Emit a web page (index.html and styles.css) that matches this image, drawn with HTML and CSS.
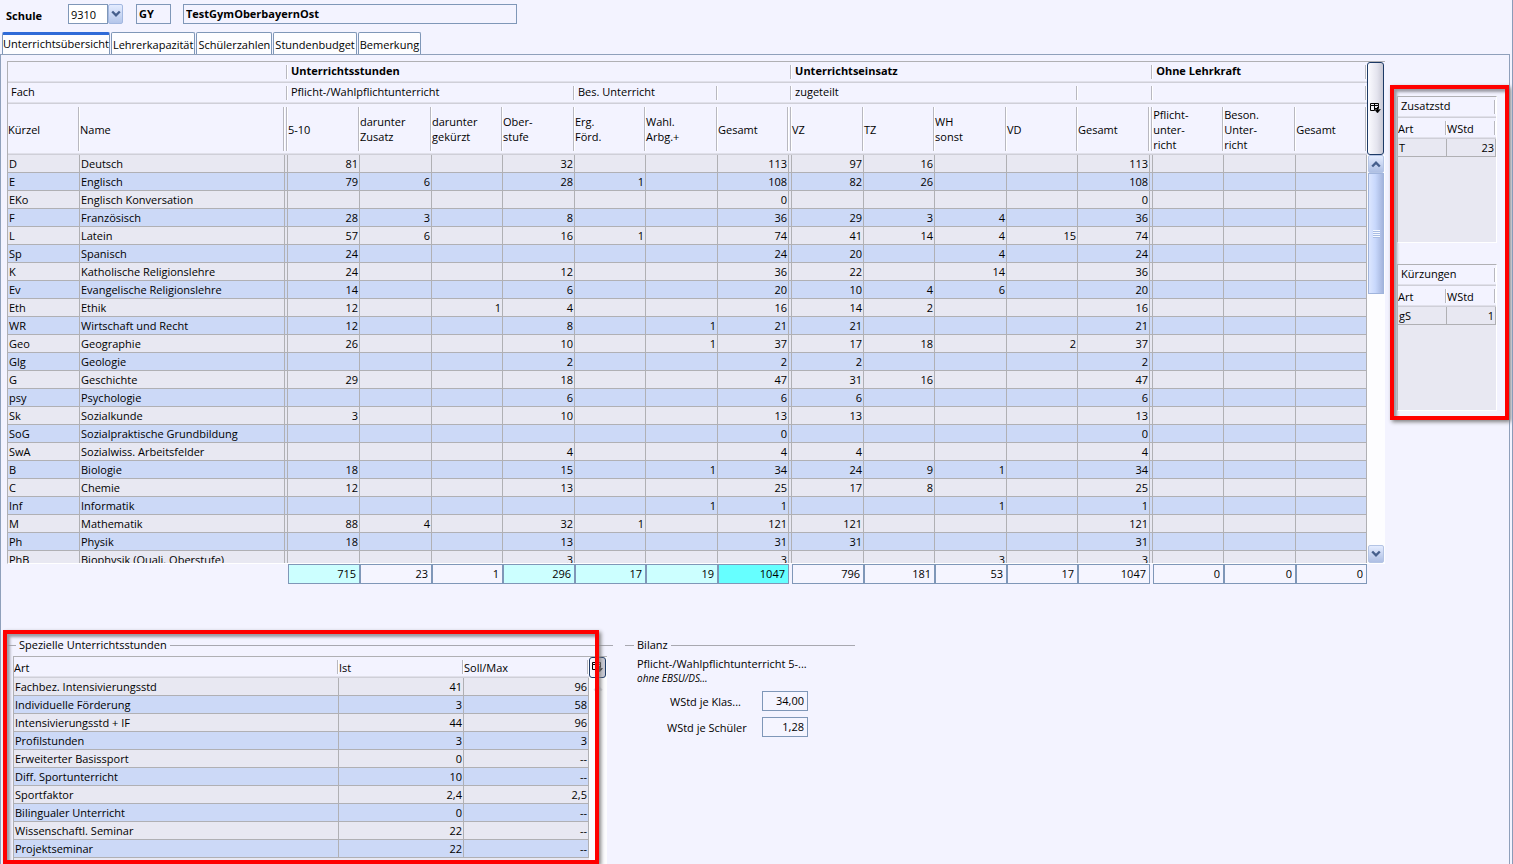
FILE: index.html
```html
<!DOCTYPE html>
<html lang="de">
<head>
<meta charset="utf-8">
<title>Unterrichtsübersicht</title>
<link rel="stylesheet" href="styles.css">
</head>
<body>
<svg class="sprite" aria-hidden="true">
  <symbol id="columns" viewBox="0 0 11 11"><path d="M.5 .5h8v2h-8zM.5 2.500v5h4M4.500 .5v7M8.500 2.500v3" fill="none" stroke="currentColor"/><path d="M4.500 5.500h4M7.500 4v3" fill="none" stroke="currentColor"/><path d="M4.500 6.500h6L7.500 10z" fill="currentColor" stroke="currentColor" stroke-width=".4"/></symbol>
  <symbol id="down" viewBox="0 0 10 8"><path d="M1.200 1.500 5 5.300l3.800-3.800" fill="none" stroke="currentColor" stroke-width="2.400"/></symbol>
  <symbol id="up" viewBox="0 0 10 8"><path d="M1.200 6.500 5 2.700l3.800 3.800" fill="none" stroke="currentColor" stroke-width="2.400"/></symbol>
</svg>

<header class="school">
  <label class="school-label" for="school-no">Schule</label>
  <span class="combo">
    <select id="school-no"><option>9310</option></select>
    <span class="combo-arrow"><svg class="chevron"><use href="#down"/></svg></span>
  </span>
  <input class="field school-type" value="GY" aria-label="Schulart" readonly>
  <input class="field school-name" value="TestGymOberbayernOst" aria-label="Schulname" readonly>
</header>

<nav class="tabs" role="tablist">
  <button class="tab tab-active" role="tab" aria-selected="true">Unterrichtsübersicht</button>
  <button class="tab" role="tab">Lehrerkapazität</button>
  <button class="tab" role="tab">Schülerzahlen</button>
  <button class="tab" role="tab">Stundenbudget</button>
  <button class="tab" role="tab">Bemerkung</button>
</nav>

<main class="panel">
  <div class="content">
    <div class="pane pane-main">
      <div class="viewport">
        <table class="grid lessons">
          <colgroup>
            <col class="c72"><col class="c205"><col class="c3">
            <col class="c72"><col class="c72"><col class="c71"><col class="c72"><col class="c71"><col class="c72"><col class="c71"><col class="c3">
            <col class="c72"><col class="c71"><col class="c72"><col class="c71"><col class="c72"><col class="c3">
            <col class="c71"><col class="c72"><col class="c71">
          </colgroup>
          <thead>
            <tr class="group group-bold"><th colspan="3"></th><th colspan="8">Unterrichtsstunden</th><th colspan="6">Unterrichtseinsatz</th><th colspan="3">Ohne Lehrkraft</th></tr>
            <tr class="group"><th colspan="3">Fach</th><th colspan="4">Pflicht-/Wahlpflichtunterricht</th><th colspan="2">Bes. Unterricht</th><th colspan="2"></th><th colspan="4">zugeteilt</th><th colspan="2"></th><th colspan="3"></th></tr>
            <tr class="columns"><th>Kürzel</th><th>Name</th><th></th><th>5-10</th><th>darunter<br>Zusatz</th><th>darunter<br>gekürzt</th><th>Ober-<br>stufe</th><th>Erg.<br>Förd.</th><th>Wahl.<br>Arbg.+</th><th>Gesamt</th><th></th><th>VZ</th><th>TZ</th><th>WH<br>sonst</th><th>VD</th><th>Gesamt</th><th></th><th>Pflicht-<br>unter-<br>richt</th><th>Beson.<br>Unter-<br>richt</th><th>Gesamt</th></tr>
          </thead>
          <tbody id="lessons"></tbody>
        </table>
      </div>
      <div class="rail">
        <button class="config config-tall" aria-label="Spalten wählen"><svg class="config-icon"><use href="#columns"/></svg></button>
        <div class="scrollbar">
          <button class="step" aria-label="Nach oben"><svg class="chevron"><use href="#up"/></svg></button>
          <div class="thumb"><span class="grip"></span></div>
          <button class="step step-end" aria-label="Nach unten"><svg class="chevron"><use href="#down"/></svg></button>
        </div>
      </div>
    </div>

    <div class="totals" id="totals"></div>

    <div class="lower">
      <fieldset class="box special">
        <legend>Spezielle Unterrichtsstunden</legend>
        <div class="pane pane-special">
          <div class="viewport">
            <table class="grid">
              <colgroup><col class="c325"><col class="c125"><col class="c125"></colgroup>
              <thead><tr class="single"><th>Art</th><th>Ist</th><th>Soll/Max</th></tr></thead>
              <tbody id="special"></tbody>
            </table>
          </div>
          <div class="rail rail-idle">
            <button class="config" aria-label="Spalten wählen"><svg class="config-icon"><use href="#columns"/></svg></button>
            <svg class="chevron idle"><use href="#up"/></svg>
          </div>
        </div>
      </fieldset>
      <fieldset class="box balance">
        <legend>Bilanz</legend>
        <p class="balance-title">Pflicht-/Wahlpflichtunterricht 5-...</p>
        <p class="balance-note">ohne EBSU/DS...</p>
        <div class="balance-row"><label for="per-class">WStd je Klas...</label><input class="field num" id="per-class" value="34,00" readonly></div>
        <div class="balance-row"><label for="per-pupil">WStd je Schüler</label><input class="field num" id="per-pupil" value="1,28" readonly></div>
      </fieldset>
      <div class="mark mark-special"></div>
    </div>
  </div>

  <aside class="mark side">
    <div class="pane side-pane">
      <table class="grid">
        <thead><tr class="group"><th colspan="2">Zusatzstd</th></tr><tr class="single"><th>Art</th><th>WStd</th></tr></thead>
        <tbody><tr><td>T</td><td class="n">23</td></tr></tbody>
      </table>
    </div>
    <div class="pane side-pane">
      <table class="grid">
        <thead><tr class="group"><th colspan="2">Kürzungen</th></tr><tr class="single"><th>Art</th><th>WStd</th></tr></thead>
        <tbody><tr><td>gS</td><td class="n">1</td></tr></tbody>
      </table>
    </div>
  </aside>
</main>
<script src="app.js"></script>
</body>
</html>
```
FILE: styles.css
```css
:root {
  --bg: #f3f3ff;
  --row: #e8e8f2;
  --row-alt: #ccd9f7;
  --line: #b0b0b4;
  --edge: #7f97b8;
  --red: #ff0000;
}
* { box-sizing: border-box; }
body {
  margin: 0;
  height: 100vh;
  display: flex;
  flex-direction: column;
  overflow: hidden;
  background: var(--bg);
  border-right: 1px solid #8a9bb8;
  font: 11px/15px "Open Sans", "Noto Sans", sans-serif;
  color: #000;
}
button, input, select { font: inherit; color: inherit; margin: 0; }
.sprite { position: absolute; width: 0; height: 0; }

.school { display: flex; align-items: center; padding: 4px 6px 0; height: 24px; }
.school-label { width: 62px; padding-top: 2px; font-weight: bold; }
.combo { display: flex; width: 55px; height: 20px; margin-right: 13px; }
.combo select {
  appearance: none;
  flex: 1;
  width: 40px;
  padding: 0 2px;
  border: 1px solid var(--edge);
  border-radius: 0;
  background: #fff;
}
.combo-arrow {
  display: flex;
  align-items: center;
  justify-content: center;
  width: 15px;
  border: 1px solid #a3b8e0;
  border-radius: 2px;
  background: linear-gradient(#e4ecff, #b4c6ea);
}
.chevron { display: block; width: 10px; height: 8px; color: #465f8c; }
.field {
  height: 20px;
  padding: 0 3px 2px 2px;
  border: 1px solid var(--edge);
  background: #f5f5ff;
}
.school-type { width: 35px; margin-right: 12px; font-weight: bold; background: var(--bg); }
.school-name { width: 334px; font-weight: bold; background: var(--bg); }

.tabs { display: flex; gap: 1px; padding: 8px 2px 0; align-items: stretch; height: 30px; }
.tab {
  height: 22px;
  padding: 2px 1px 0;
  border: 1px solid var(--edge);
  border-bottom: 0;
  border-radius: 2px 2px 0 0;
  background: #fdfdff;
  white-space: nowrap;
}
.tab-active { padding: 0 0 2px; border-top: 3px solid #2f6bd8; }

.panel {
  flex: 1;
  display: flex;
  gap: 5px;
  align-items: flex-start;
  min-height: 0;
  margin-right: 2px;
  padding: 6px 0 0 6px;
  border: 1px solid #8fa0bb;
  border-bottom: 0;
}
.content { flex: 1; min-width: 0; }

.pane {
  display: flex;
  overflow: hidden;
  border-top: 1px solid var(--line);
  border-left: 1px solid var(--line);
}
.viewport { flex: 1; min-width: 0; overflow: hidden; }
.pane-main { height: 503px; border-bottom: 1px solid #fff; }
.grid { width: 100%; table-layout: fixed; border-collapse: separate; border-spacing: 0; }
.c3 { width: 3px; }
.c71 { width: 71px; }
.c72 { width: 72px; }
.c125 { width: 125px; }
.c205 { width: 205px; }
.c325 { width: 325px; }
.grid th {
  padding: 0;
  text-align: left;
  font-weight: normal;
  border-bottom: 1px solid #cfcfd8;
  background:
    linear-gradient(#e0e0ea, #e0e0ea) bottom / 100% 1px no-repeat,
    linear-gradient(to right, #b8b8c0 1px, #fff 1px) right 3px / 2px calc(100% - 6px) no-repeat,
    var(--bg);
}
.grid .group th { height: 21px; padding: 0 3px 3px; }
.grid .group-bold th { font-weight: bold; }
.grid .single th { height: 21px; }
.grid .columns th { height: 51px; }
.grid td {
  height: 18px;
  padding: 0 1px;
  line-height: 17px;
  white-space: nowrap;
  overflow: hidden;
  background: var(--row);
  border-right: 1px solid var(--line);
  border-bottom: 1px solid var(--line);
}
.grid tr:nth-child(even) td { background: var(--row-alt); }
.grid td.n { text-align: right; }
.grid td.gap { padding: 0; }

.rail { display: flex; flex-direction: column; width: 18px; }
.config {
  display: flex;
  align-items: center;
  justify-content: center;
  width: 17px;
  height: 21px;
  padding: 0;
  border: 1px solid #1d3a66;
  border-radius: 3px;
  background: linear-gradient(to right, #fbfbff, #e4e4ee 60%, #c8c8d4);
}
.config-tall { height: 93px; }
.config-icon { flex: none; width: 11px; height: 11px; }
.scrollbar { flex: 1; display: flex; flex-direction: column; background: #fdfdff; }
.step {
  display: flex;
  align-items: center;
  justify-content: center;
  height: 18px;
  margin: 0 1px;
  padding: 0;
  border: 1px solid #b4c4e4;
  border-radius: 2px;
  background: linear-gradient(#e4ecff, #aebfe4);
}
.step-end { margin-top: auto; }
.thumb {
  display: flex;
  align-items: center;
  justify-content: center;
  height: 121px;
  margin: 0 1px;
  border: 1px solid #a0b4dc;
  background: linear-gradient(to right, #dce6ff, #c8d8fc 45%, #a4b4dc);
}
.grip { width: 7px; height: 8px; background: repeating-linear-gradient(#f4f8ff 0 1px, #a8bce4 1px 2px); }

.totals {
  display: grid;
  grid-template-columns: 280fr 72fr 72fr 71fr 72fr 71fr 72fr 71fr 3fr 72fr 71fr 72fr 71fr 72fr 3fr 71fr 72fr 71fr;
  margin: 0 18px 0 1px;
}
.totals .field { width: 100%; min-width: 0; }
.num { text-align: right; }
.sum-part { background: #ccffff; }
.sum-all { background: #66ffff; }

.lower {
  position: relative;
  display: grid;
  grid-template-columns: 606fr 230fr 518fr;
  gap: 12px;
  margin-top: 53px;
}
.box {
  min-width: 0;
  margin: 0;
  padding: 0;
  border: 0;
  border-top: 1px solid #a8a8b0;
}
.box legend { margin-left: 9px; padding: 0 3px; line-height: 16px; }
.pane-special { height: 220px; margin: 3px 6px 0; background: var(--row); }
.rail-idle { background: #fdfdff; gap: 6px; }
.idle { margin-left: 4px; color: #dcdce4; }
.balance p { margin: 0 0 0 12px; }
.balance .balance-title { margin-top: 3px; }
.balance .balance-note { font-size: 10px; font-style: italic; line-height: 15px; }
.balance-row {
  display: grid;
  grid-template-columns: 137px 46px;
  align-items: center;
  margin-top: 6px;
}
.balance-row label { padding: 0 18px 0 42px; white-space: nowrap; text-align: center; }
.balance-note + .balance-row { margin-top: 5px; }

.mark {
  border: 4px solid var(--red);
  box-shadow: 2px 2px 4px #808080, inset 3px 3px 3px #9a9aa4;
}
.mark-special {
  position: absolute;
  top: -7px;
  left: -4px;
  width: 596px;
  height: 234px;
  pointer-events: none;
}
.side {
  display: flex;
  flex-direction: column;
  gap: 21px;
  width: 119px;
  margin-top: 24px;
  padding: 7px 8px 5px 3px;
}
.side-pane {
  align-items: flex-start;
  height: 147px;
  background: var(--row);
  border-right: 1px solid #fff;
  border-bottom: 1px solid #fff;
}
```
FILE: app.js
```js
// Columns: 5-10, Zusatz, gekürzt, Oberstufe, Erg., Wahl., Gesamt | VZ, TZ, WH, VD, Gesamt | Ohne Lehrkraft
const lessons = [
  ["D", "Deutsch", "81,,,32,,,113|97,16,,,113|,,"],
  ["E", "Englisch", "79,6,,28,1,,108|82,26,,,108|,,"],
  ["EKo", "Englisch Konversation", ",,,,,,0|,,,,0|,,"],
  ["F", "Französisch", "28,3,,8,,,36|29,3,4,,36|,,"],
  ["L", "Latein", "57,6,,16,1,,74|41,14,4,15,74|,,"],
  ["Sp", "Spanisch", "24,,,,,,24|20,,4,,24|,,"],
  ["K", "Katholische Religionslehre", "24,,,12,,,36|22,,14,,36|,,"],
  ["Ev", "Evangelische Religionslehre", "14,,,6,,,20|10,4,6,,20|,,"],
  ["Eth", "Ethik", "12,,1,4,,,16|14,2,,,16|,,"],
  ["WR", "Wirtschaft und Recht", "12,,,8,,1,21|21,,,,21|,,"],
  ["Geo", "Geographie", "26,,,10,,1,37|17,18,,2,37|,,"],
  ["Glg", "Geologie", ",,,2,,,2|2,,,,2|,,"],
  ["G", "Geschichte", "29,,,18,,,47|31,16,,,47|,,"],
  ["psy", "Psychologie", ",,,6,,,6|6,,,,6|,,"],
  ["Sk", "Sozialkunde", "3,,,10,,,13|13,,,,13|,,"],
  ["SoG", "Sozialpraktische Grundbildung", ",,,,,,0|,,,,0|,,"],
  ["SwA", "Sozialwiss. Arbeitsfelder", ",,,4,,,4|4,,,,4|,,"],
  ["B", "Biologie", "18,,,15,,1,34|24,9,1,,34|,,"],
  ["C", "Chemie", "12,,,13,,,25|17,8,,,25|,,"],
  ["Inf", "Informatik", ",,,,,1,1|,,1,,1|,,"],
  ["M", "Mathematik", "88,4,,32,1,,121|121,,,,121|,,"],
  ["Ph", "Physik", "18,,,13,,,31|31,,,,31|,,"],
  ["PhB", "Biophysik (Quali. Oberstufe)", ",,,3,,,3|,,3,,3|,,"]
];
const special = [
  ["Fachbez. Intensivierungsstd", "41", "96"],
  ["Individuelle Förderung", "3", "58"],
  ["Intensivierungsstd + IF", "44", "96"],
  ["Profilstunden", "3", "3"],
  ["Erweiterter Basissport", "0", "--"],
  ["Diff. Sportunterricht", "10", "--"],
  ["Sportfaktor", "2,4", "2,5"],
  ["Bilingualer Unterricht", "0", "--"],
  ["Wissenschaftl. Seminar", "22", "--"],
  ["Projektseminar", "22", "--"]
];
const totals = [
  [["715", "sum-part"], ["23"], ["1"], ["296", "sum-part"], ["17", "sum-part"], ["19", "sum-part"], ["1047", "sum-all"]],
  [["796"], ["181"], ["53"], ["17"], ["1047"]],
  [["0"], ["0"], ["0"]]
];

const num = v => `<td class="n">${v}</td>`;
document.getElementById("lessons").innerHTML = lessons.map(([key, name, values]) =>
  `<tr><td>${key}</td><td>${name}</td>` +
  values.split("|").map(g => '<td class="gap"></td>' + g.split(",").map(num).join("")).join("") +
  "</tr>").join("");
document.getElementById("special").innerHTML = special.map(([art, ist, soll]) =>
  `<tr><td>${art}</td>${num(ist)}${num(soll)}</tr>`).join("");
document.getElementById("totals").innerHTML = totals.map(group =>
  "<span></span>" + group.map(([v, cls = ""]) =>
    `<input class="field num ${cls}" value="${v}" aria-label="Summe" readonly>`).join("")).join("");
```
